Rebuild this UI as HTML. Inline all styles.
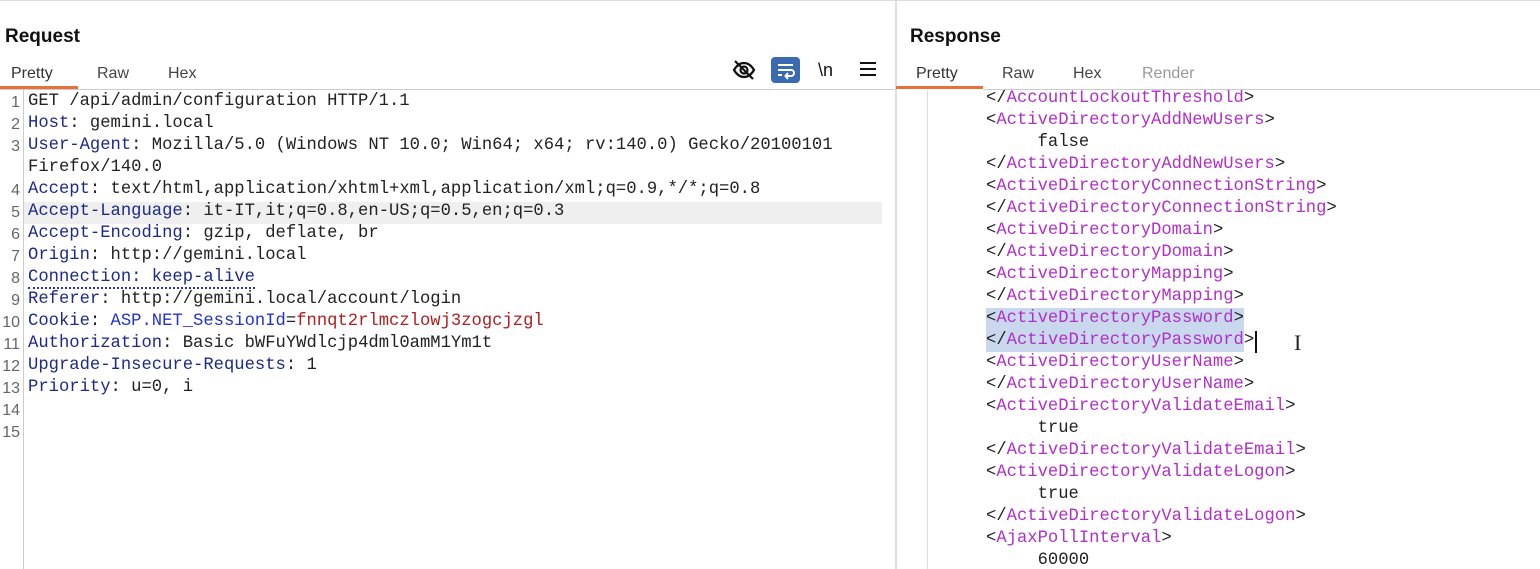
<!DOCTYPE html>
<html><head><style>
body{margin:0;width:1540px;height:569px;background:#fff;overflow:hidden;position:relative;font-family:"Liberation Sans",sans-serif}
.t{position:absolute;top:26px;font-weight:bold;font-size:19px;color:#111}
.tab{position:absolute;top:65px;font-size:16px;color:#444}
.code{position:absolute;font-family:"Liberation Mono",monospace;font-size:17.2px;line-height:22px;white-space:pre;color:#222}
.k{color:#1d2a8a}.r{color:#b02020}.b{color:#2233cc}.p{color:#b030c8}
.ln{position:absolute;left:0;width:20px;text-align:right;font-family:"Liberation Sans",sans-serif;font-size:16px;color:#666;line-height:22px}
</style></head><body>
<div style="position:absolute;left:0;top:0;width:1540px;height:1px;background:#ddd"></div>
<div style="position:absolute;left:895px;top:0;width:2px;height:569px;background:#ddd"></div>
<div class="t" style="left:5px">Request</div>
<div class="t" style="left:910px">Response</div>
<div class="tab" style="left:11px;color:#333">Pretty</div>
<div class="tab" style="left:97px">Raw</div>
<div class="tab" style="left:168px">Hex</div>
<div style="position:absolute;left:0;top:86px;width:78px;height:3px;background:#e8703a"></div>
<div class="tab" style="left:916px;color:#333">Pretty</div>
<div class="tab" style="left:1002px">Raw</div>
<div class="tab" style="left:1073px">Hex</div>
<div class="tab" style="left:1142px;color:#999">Render</div>
<div style="position:absolute;left:896px;top:86px;width:87px;height:3px;background:#e8703a"></div>
<div style="position:absolute;left:0;top:89px;width:895px;height:1px;background:#ccc"></div>
<div style="position:absolute;left:983px;top:89px;width:557px;height:1px;background:#ccc"></div>
<svg style="position:absolute;left:731px;top:57px" width="26" height="26" viewBox="0 0 26 26" fill="none" stroke="#111" stroke-width="2.2"><path d="M3 13c3-5 6-7 10-7s7 2 10 7c-3 5-6 7-10 7s-7-2-10-7z"/><circle cx="13" cy="13" r="3.5"/><path d="M4 4l18 18"/></svg>
<div style="position:absolute;left:771px;top:57px;width:29px;height:26px;background:#3a6ab0;border-radius:4px"></div>
<svg style="position:absolute;left:771px;top:57px" width="29" height="26" viewBox="0 0 29 26" fill="none" stroke="#fff" stroke-width="2"><path d="M7 8h15M7 13h13a3 3 0 010 6h-5M7 18h4M17 16l-2.5 3 2.5 3"/></svg>
<div style="position:absolute;left:818px;top:60px;font-size:18px;color:#111">\n</div>
<svg style="position:absolute;left:859px;top:60px" width="18" height="18" viewBox="0 0 18 18" stroke="#111" stroke-width="2"><path d="M1 3h16M1 9h16M1 15h16"/></svg>
<div style="position:absolute;left:23px;top:90px;width:1px;height:479px;background:#ccc"></div>
<div style="position:absolute;left:24px;top:202px;width:858px;height:22px;background:#efefef"></div>
<div class="ln" style="top:92px">1<br>2<br>3<br><br>4<br>5<br>6<br>7<br>8<br>9<br>10<br>11<br>12<br>13<br>14<br>15</div>
<div class="code" style="left:28px;top:91px">GET /api/admin/configuration HTTP/1.1
<span class="k">Host</span>: gemini.local
<span class="k">User-Agent</span>: Mozilla/5.0 (Windows NT 10.0; Win64; x64; rv:140.0) Gecko/20100101
Firefox/140.0
<span class="k">Accept</span>: text/html,application/xhtml+xml,application/xml;q=0.9,*/*;q=0.8
<span class="k">Accept-Language</span>: it-IT,it;q=0.8,en-US;q=0.5,en;q=0.3
<span class="k">Accept-Encoding</span>: gzip, deflate, br
<span class="k">Origin</span>: http://gemini.local
<span class="k" style="border-bottom:2px dotted #2233cc">Connection: keep-alive</span>
<span class="k">Referer</span>: http://gemini.local/account/login
<span class="k">Cookie</span>: <span class="b">ASP.NET_SessionId</span>=<span class="r">fnnqt2rlmczlowj3zogcjzgl</span>
<span class="k">Authorization</span>: Basic bWFuYWdlcjp4dml0amM1Ym1t
<span class="k">Upgrade-Insecure-Requests</span>: 1
<span class="k">Priority</span>: u=0, i</div>
<div style="position:absolute;left:927px;top:90px;width:1px;height:479px;background:#ddd"></div>
<div style="position:absolute;left:986px;top:308px;width:258px;height:44px;background:#c9d8ec"></div>
<div style="position:absolute;left:1255px;top:331px;width:2px;height:22px;background:#111"></div>
<div style="position:absolute;left:1294px;top:330px;font-size:22px;color:#222;font-family:'Liberation Serif',serif">I</div>
<div style="position:absolute;left:928px;top:90px;width:612px;height:479px;overflow:hidden">
<div class="code" style="left:58px;top:-2px">&lt;/<span class="p">AccountLockoutThreshold</span>&gt;
&lt;<span class="p">ActiveDirectoryAddNewUsers</span>&gt;
     false
&lt;/<span class="p">ActiveDirectoryAddNewUsers</span>&gt;
&lt;<span class="p">ActiveDirectoryConnectionString</span>&gt;
&lt;/<span class="p">ActiveDirectoryConnectionString</span>&gt;
&lt;<span class="p">ActiveDirectoryDomain</span>&gt;
&lt;/<span class="p">ActiveDirectoryDomain</span>&gt;
&lt;<span class="p">ActiveDirectoryMapping</span>&gt;
&lt;/<span class="p">ActiveDirectoryMapping</span>&gt;
&lt;<span class="p">ActiveDirectoryPassword</span>&gt;
&lt;/<span class="p">ActiveDirectoryPassword</span>&gt;
&lt;<span class="p">ActiveDirectoryUserName</span>&gt;
&lt;/<span class="p">ActiveDirectoryUserName</span>&gt;
&lt;<span class="p">ActiveDirectoryValidateEmail</span>&gt;
     true
&lt;/<span class="p">ActiveDirectoryValidateEmail</span>&gt;
&lt;<span class="p">ActiveDirectoryValidateLogon</span>&gt;
     true
&lt;/<span class="p">ActiveDirectoryValidateLogon</span>&gt;
&lt;<span class="p">AjaxPollInterval</span>&gt;
     60000</div>
</div>
</body></html>
